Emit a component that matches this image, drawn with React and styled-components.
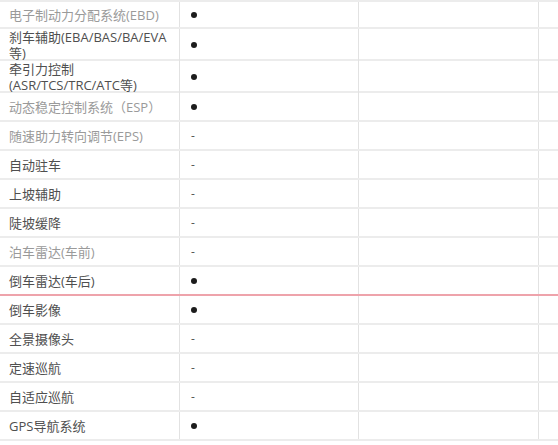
import React from "react";
import styled, { createGlobalStyle } from "styled-components";

const GlobalStyle = createGlobalStyle`
  html, body {
    margin: 0;
    padding: 0;
    background: #ffffff;
  }
  body {
    font-family: "Open Sans", "Noto Sans CJK SC", sans-serif;
  }
`;

// Styled Components

const Table = styled.div`
  width: 558px;
  border-top: 2px solid #ececec;
`;

const Row = styled.div`
  display: grid;
  grid-template-columns: 180px 179px 180px 1fr;
  height: ${(props) => props.$h || 29}px;
  box-sizing: border-box;
  border-bottom: 2px solid ${(props) => (props.$active ? "#eea3ab" : "#ececec")};
`;

const Cell = styled.div`
  display: flex;
  align-items: center;
  box-sizing: border-box;
  border-right: ${(props) => (props.$last ? "none" : "1px solid #e2e2e2")};
  padding-left: ${(props) => (props.$first ? "9px" : "11px")};
`;

const Name = styled.span`
  font-size: 13px;
  line-height: 16px;
  white-space: nowrap;
  color: ${(props) => (props.$muted ? "#9a9a9a" : "#4f4f4f")};
`;

const Dot = styled.span`
  display: inline-block;
  width: 6px;
  height: 6px;
  border-radius: 50%;
  background: #1c1c1c;
`;

const Dash = styled.span`
  font-size: 12px;
  color: #555;
  line-height: 12px;
`;

const rows = [
  { name: "电子制动力分配系统(EBD)", muted: true, has: true, h: 27 },
  { name: ["刹车辅助(EBA/BAS/BA/EVA", "等)"], has: true, h: 32 },
  { name: ["牵引力控制", "(ASR/TCS/TRC/ATC等)"], has: true, h: 32 },
  { name: "动态稳定控制系统（ESP）", muted: true, has: true },
  { name: "随速助力转向调节(EPS)", muted: true, has: false },
  { name: "自动驻车", has: false },
  { name: "上坡辅助", has: false },
  { name: "陡坡缓降", has: false },
  { name: "泊车雷达(车前)", muted: true, has: false },
  { name: "倒车雷达(车后)", has: true, active: true },
  { name: "倒车影像", has: true },
  { name: "全景摄像头", has: false },
  { name: "定速巡航", has: false },
  { name: "自适应巡航", has: false },
  { name: "GPS导航系统", has: true },
];

const SpecTable = () => {
  return (
    <Table>
      {rows.map((r, i) => (
        <Row key={i} $h={r.h} $active={r.active}>
          <Cell $first>
            <Name $muted={r.muted}>
              {Array.isArray(r.name)
                ? r.name.map((line, j) => (
                    <React.Fragment key={j}>
                      {j > 0 && <br />}
                      {line}
                    </React.Fragment>
                  ))
                : r.name}
            </Name>
          </Cell>
          <Cell>{r.has ? <Dot /> : <Dash>-</Dash>}</Cell>
          <Cell />
          <Cell $last />
        </Row>
      ))}
    </Table>
  );
};

export default function App() {
  return (
    <>
      <GlobalStyle />
      <SpecTable />
    </>
  );
}
